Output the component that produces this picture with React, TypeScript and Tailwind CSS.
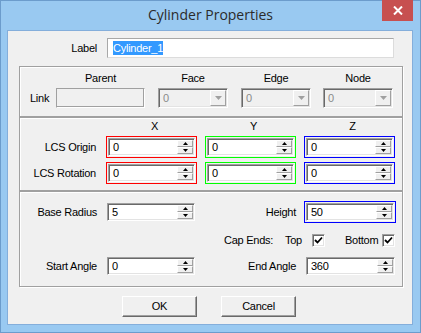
import React from "react";

const sunken =
  "border border-t-[#a0a0a0] border-l-[#a0a0a0] border-r-white border-b-white shadow-[inset_1px_1px_0_#696969,inset_-1px_-1px_0_#e3e3e3] p-px";

function SpinBtn({ up }: { up?: boolean }) {
  return (
    <div className="flex-1 flex items-center justify-center bg-[#f0f0f0] border border-t-white border-l-white border-r-[#a0a0a0] border-b-[#a0a0a0]">
      <svg width="5" height="3" viewBox="0 0 5 3">
        {up ? <path d="M2.5 0 L5 3 L0 3 Z" fill="#000" /> : <path d="M0 0 L5 0 L2.5 3 Z" fill="#000" />}
      </svg>
    </div>
  );
}

function SpinEdit({ cls, value }: { cls: string; value: string }) {
  return (
    <div className={`flex bg-white ${sunken} ${cls}`}>
      <div className="flex-1 pl-[3px] flex items-center leading-[13px]">{value}</div>
      <div className="flex flex-col w-[16px]">
        <SpinBtn up />
        <SpinBtn />
      </div>
    </div>
  );
}

function Combo() {
  return (
    <div className={`flex bg-[#f0f0f0] w-[70px] h-[20px] ${sunken}`}>
      <div className="flex-1 pl-[3px] flex items-center text-[#8a8a8a]">0</div>
      <div className="w-[16px] flex items-center justify-center bg-[#f0f0f0] border border-t-white border-l-white border-r-[#a0a0a0] border-b-[#a0a0a0]">
        <svg width="7" height="4" viewBox="0 0 7 4">
          <path d="M0 0 L7 0 L3.5 4 Z" fill="#a0a0a0" />
        </svg>
      </div>
    </div>
  );
}

function CheckBox() {
  return (
    <div className={`w-[13px] h-[13px] bg-white flex items-center justify-center ${sunken}`}>
      <svg width="9" height="9" viewBox="0 0 9 9">
        <path d="M1 4 L3.5 6.5 L8 1.5" stroke="#000" strokeWidth="1.8" fill="none" />
      </svg>
    </div>
  );
}

function Button({ label, cls }: { label: string; cls: string }) {
  return (
    <div
      className={`w-[75px] h-[21px] flex items-center justify-center bg-[#f0f0f0] border border-t-white border-l-white border-r-[#696969] border-b-[#696969] shadow-[inset_-1px_-1px_0_#a0a0a0] ${cls}`}
    >
      {label}
    </div>
  );
}

const group = "w-[384px] border border-[#a0a0a0] shadow-[inset_1px_1px_0_#fff,1px_1px_0_#fff]";

export default function App() {
  return (
    <div className="w-[421px] h-[333px] bg-[#99c9f1] border border-[#6c9ccc] flex flex-col text-[11px] tracking-[-0.25px] text-black font-['Liberation_Sans',Arial,sans-serif]">
      {/* Title bar */}
      <div className="h-[29px] grid grid-cols-[1fr_auto_1fr] items-start">
        <div />
        <div className="pt-[5px] text-[14px] leading-[18px] tracking-normal text-[#2b2b2b] font-['Open_Sans',sans-serif]">
          Cylinder Properties
        </div>
        <div className="justify-self-end mr-[7px] -mt-px w-[31px] h-[21px] bg-[#c75050] flex items-center justify-center">
          <svg width="10" height="9" viewBox="0 0 10 9">
            <path d="M1 0.5 L9 8.5 M9 0.5 L1 8.5" stroke="#fff" strokeWidth="2" />
          </svg>
        </div>
      </div>

      {/* Client area */}
      <div className="ml-[6px] w-[406px] h-[295px] border border-[#84aedb] bg-[#f0f0f0] flex flex-col">
        {/* Label row */}
        <div className="flex items-center mt-[7px] h-[20px]">
          <div className="w-[89px] text-right">Label</div>
          <div className="ml-[10px] w-[287px] h-[20px] bg-white border border-[#a8a8a8] border-r-[#dcdcdc] border-b-[#dcdcdc] flex items-center pl-[5px]">
            <span className="bg-[#3399ff] text-white leading-[14px]">Cylinder_1</span>
          </div>
        </div>

        <div className="ml-[11px] mt-[8px] flex flex-col">
          {/* Group 1 */}
          <div className={`${group} h-[51px]`}>
            <div className="flex pt-[5px] leading-[13px]">
              <div className="w-[36px]" />
              <div className="w-[89px] text-center">Parent</div>
              <div className="ml-[13px] w-[70px] text-center">Face</div>
              <div className="ml-[13px] w-[70px] text-center">Edge</div>
              <div className="ml-[12px] w-[70px] text-center">Node</div>
            </div>
            <div className="flex items-center mt-[3px] h-[20px]">
              <div className="w-[36px] pl-[10px]">Link</div>
              <div className="w-[89px] h-[20px] bg-[#f0f0f0] border border-t-[#a0a0a0] border-l-[#a0a0a0] border-r-white border-b-white shadow-[inset_-1px_-1px_0_#a0a0a0]" />
              <div className="ml-[13px]">
                <Combo />
              </div>
              <div className="ml-[13px]">
                <Combo />
              </div>
              <div className="ml-[12px]">
                <Combo />
              </div>
            </div>
          </div>

          {/* Group 2 */}
          <div className={`${group} h-[74px]`}>
            <div className="flex pt-[2px] leading-[13px]">
              <div className="w-[76px]" />
              <div className="ml-[10px] w-[91px] pl-[6px] text-center">X</div>
              <div className="ml-[8px] w-[91px] pl-[6px] text-center">Y</div>
              <div className="ml-[8px] w-[91px] pl-[6px] text-center">Z</div>
            </div>
            <div className="flex items-center mt-[3px] h-[22px]">
              <div className="w-[76px] text-right">LCS Origin</div>
              <div className="ml-[10px] w-[91px] h-[22px] border border-[#ff0000] p-px">
                <SpinEdit cls="w-full h-full" value="0" />
              </div>
              <div className="ml-[8px] w-[91px] h-[22px] border border-[#00ff00] p-px">
                <SpinEdit cls="w-full h-full" value="0" />
              </div>
              <div className="ml-[8px] w-[91px] h-[22px] border border-[#0000ff] p-px">
                <SpinEdit cls="w-full h-full" value="0" />
              </div>
            </div>
            <div className="flex items-center mt-[4px] h-[22px]">
              <div className="w-[76px] text-right">LCS Rotation</div>
              <div className="ml-[10px] w-[91px] h-[22px] border border-[#ff0000] p-px">
                <SpinEdit cls="w-full h-full" value="0" />
              </div>
              <div className="ml-[8px] w-[91px] h-[22px] border border-[#00ff00] p-px">
                <SpinEdit cls="w-full h-full" value="0" />
              </div>
              <div className="ml-[8px] w-[91px] h-[22px] border border-[#0000ff] p-px">
                <SpinEdit cls="w-full h-full" value="0" />
              </div>
            </div>
          </div>

          {/* Group 3 */}
          <div className={`${group} h-[96px]`}>
            <div className="flex items-center mt-[9px] h-[22px]">
              <div className="w-[77px] text-right">Base Radius</div>
              <SpinEdit cls="ml-[10px] w-[88px] h-[18px]" value="5" />
              <div className="w-[101px] text-right">Height</div>
              <div className="ml-[8px] w-[92px] h-[22px] border border-[#0000ff] p-px">
                <SpinEdit cls="w-full h-full" value="50" />
              </div>
            </div>
            <div className="flex items-center mt-[11px] h-[13px]">
              <div className="w-[204px]" />
              <div className="w-[61px]">Cap Ends:</div>
              <div className="w-[27px]">Top</div>
              <CheckBox />
              <div className="ml-[20px] w-[37px]">Bottom</div>
              <CheckBox />
            </div>
            <div className="flex items-center mt-[10px] h-[18px]">
              <div className="w-[77px] text-right">Start Angle</div>
              <SpinEdit cls="ml-[10px] w-[88px] h-[18px]" value="0" />
              <div className="w-[101px] text-right">End Angle</div>
              <SpinEdit cls="ml-[10px] w-[89px] h-[18px]" value="360" />
            </div>
          </div>
        </div>

        {/* Buttons */}
        <div className="flex mt-[9px]">
          <Button label="OK" cls="ml-[114px]" />
          <Button label="Cancel" cls="ml-[24px]" />
        </div>
      </div>
    </div>
  );
}
